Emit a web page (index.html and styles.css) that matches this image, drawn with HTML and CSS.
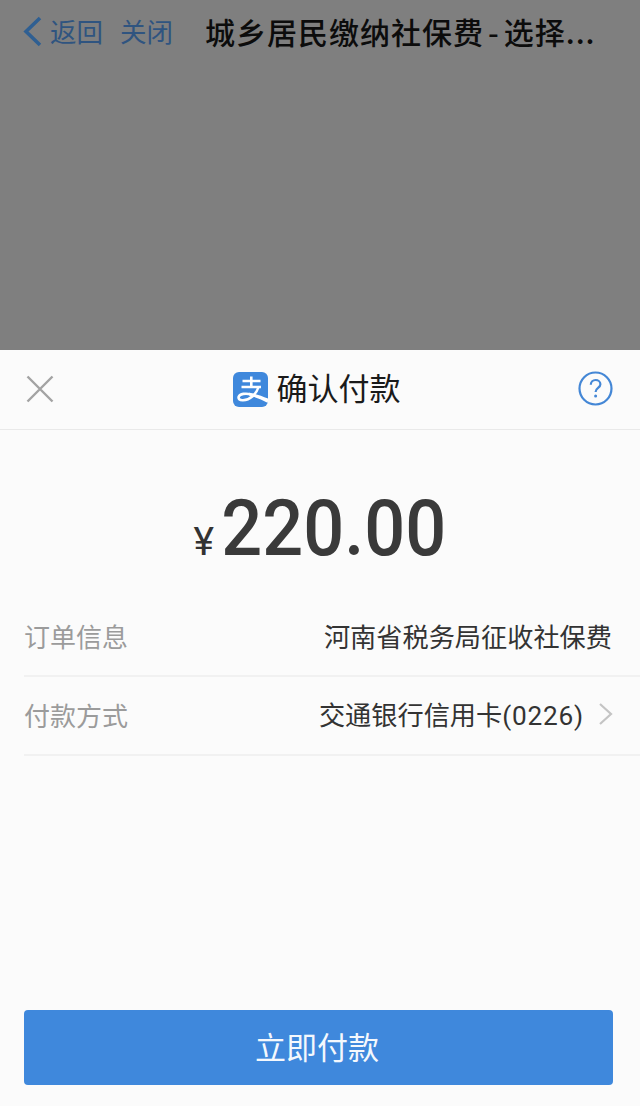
FILE: index.html
```html
<!DOCTYPE html>
<html lang="zh-CN">
<head>
<meta charset="utf-8">
<title>确认付款</title>
<link rel="stylesheet" href="styles.css">
</head>
<body>
<div class="page">
  <div class="backdrop">
    <header class="topbar">
      <svg class="back-icon" width="22" height="32" viewBox="0 0 22 32"><path d="M19 3 5 16.500l14 13.500" fill="none" stroke="#2f5f92" stroke-width="3.600"/></svg>
      <span class="nav-link">返回</span>
      <span class="nav-link close-link">关闭</span>
      <span class="page-title">城乡居民缴纳社保费<span class="hyphen">-</span>选择...</span>
    </header>
  </div>
  <main class="sheet">
    <div class="sheet-head">
      <svg class="x-icon" width="28" height="28" viewBox="0 0 28 28"><path d="M1.500 1.500 26.500 26.500M26.500 1.500 1.500 26.500" stroke="#a3a3a3" stroke-width="2.400" fill="none"/></svg>
      <div class="head-center">
        <svg class="ali-logo" width="35" height="35" viewBox="0 0 35 35">
          <defs><clipPath id="logo-clip"><rect width="35" height="35" rx="6"/></clipPath></defs>
          <rect width="35" height="35" rx="6" fill="#3f88dc"/>
          <g clip-path="url(#logo-clip)">
            <path d="M9.500 9H27.500M18.300 4.500V15M8.500 15H28" fill="none" stroke="#fff" stroke-width="2.600"/>
            <path d="M25.500 15C23.500 22 17 28 10 28.300 6.500 28.500 5 26.500 5.800 24.500 7 21.800 12.500 21 18 22.300" fill="none" stroke="#fff" stroke-width="2.600"/>
            <path d="M16 20.800C22 21.500 29 24 36 27V31.500C29 27.500 22 25 16 23.500Z" fill="#fff"/>
          </g>
        </svg>
        <span class="sheet-title">确认付款</span>
      </div>
      <svg class="help-icon" width="35" height="35" viewBox="0 0 35 35">
        <circle cx="17.500" cy="17.500" r="16" fill="none" stroke="#4487d6" stroke-width="2.200"/>
        <path d="M12.800 13.800c0-3 2.200-4.800 4.800-4.800s4.800 1.800 4.800 4.300c0 3.700-4.800 3.700-4.800 7.700" fill="none" stroke="#4487d6" stroke-width="2.200"/>
        <circle cx="17.600" cy="25" r="1.500" fill="#4487d6"/>
      </svg>
    </div>
    <div class="amount"><span class="currency">¥</span><span class="value">220.00</span></div>
    <div class="rows">
      <div class="row"><span class="label">订单信息</span><span class="info">河南省税务局征收社保费</span></div>
      <div class="row row-pay"><span class="label">付款方式</span><span class="info-wrap"><span class="info">交通银行信用卡<span class="card-no">(0226)</span></span>
        <svg class="chevron" width="15" height="24" viewBox="0 0 15 24"><path d="M2 2 13 12 2 22" fill="none" stroke="#c4c4c4" stroke-width="2.200"/></svg></span></div>
    </div>
    <div class="pay-wrap"><button class="pay">立即付款</button></div>
  </main>
</div>
</body>
</html>
```

FILE: styles.css
```css
* { box-sizing: border-box; }
html, body { margin: 0; padding: 0; }
body {
  width: 640px;
  height: 1106px;
  overflow: hidden;
  font-family: "Noto Sans CJK SC", "Noto Sans", sans-serif;
}
.page { display: flex; flex-direction: column; height: 1106px; }
.backdrop { height: 350px; background: #7f7f7f; flex: none; }
.topbar { display: flex; align-items: center; height: 64px; padding: 0 0 2px 21px; }
.back-icon { flex: none; margin-right: 7px; }
.nav-link { font-size: 26.500px; color: #2f5480; line-height: 62px; }
.close-link { margin-left: 17px; }
.page-title {
  margin-left: 32px;
  font-size: 30px;
  letter-spacing: 1px;
  line-height: 62px;
  color: #0c0c0c;
  white-space: nowrap;
  font-weight: 500;
}
.hyphen { padding: 0 4px; }
.sheet { flex: 1; display: flex; flex-direction: column; background: #fbfbfb; }
.sheet-head {
  height: 80px;
  flex: none;
  display: flex;
  align-items: center;
  justify-content: space-between;
  padding: 0 27px 2px 26px;
  border-bottom: 1px solid #e9e9e9;
}
.head-center { display: flex; align-items: center; gap: 9px; margin-left: 1px; }
.ali-logo { margin-top: 2px; }
.sheet-title { font-size: 31px; color: #1a1a1a; line-height: 40px; padding-bottom: 3px; }
.amount {
  height: 170px;
  flex: none;
  display: flex;
  align-items: baseline;
  justify-content: center;
  padding-top: 54px;
}
.currency { font-size: 39px; color: #333; font-family: "Roboto", sans-serif; margin-right: 7px; }
.value {
  display: block;
  font-size: 78px;
  line-height: 90px;
  color: #3a3a3a;
  font-family: "Roboto", sans-serif;
  font-weight: 500;
  transform: scaleX(0.925);
  margin: 0 -9px;
}
.rows { margin-left: 24px; flex: none; }
.row {
  height: 77px;
  display: flex;
  align-items: center;
  justify-content: space-between;
  padding: 0 28px 4px 0;
  border-bottom: 2px solid #f1f1f1;
}
.row-pay { height: 79px; padding-bottom: 3px; }
.label { font-size: 26px; color: #9b9b9b; }
.info { font-size: 26.200px; color: #333; white-space: nowrap; }
.card-no { font-family: "Roboto", sans-serif; letter-spacing: 0.800px; }
.info-wrap { display: flex; align-items: center; }
.chevron { margin-left: 14px; margin-right: -1px; }
.pay-wrap { margin-top: auto; padding: 0 27px 21px 24px; }
.pay {
  display: block;
  width: 100%;
  height: 75px;
  border: 0;
  border-radius: 4px;
  background: #3f88dc;
  color: #f4f8fd;
  font-size: 31px;
  font-family: inherit;
  padding: 0 3px 4px 0;
}
```
